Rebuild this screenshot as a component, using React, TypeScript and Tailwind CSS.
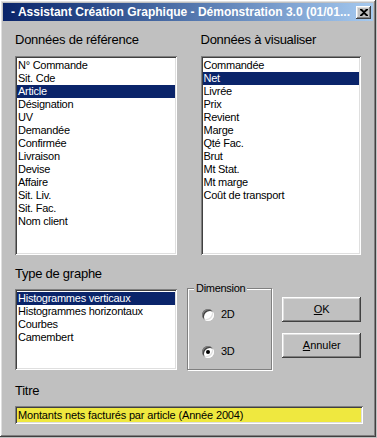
import React from "react";

const sunken =
  "shadow-[inset_1px_1px_#808080,inset_-1px_-1px_#ffffff,inset_2px_2px_#404040,inset_-2px_-2px_#dfdfdf]";
const raised =
  "shadow-[inset_-1px_-1px_#404040,inset_1px_1px_#ffffff,inset_-2px_-2px_#808080,inset_2px_2px_#dfdfdf]";

const reference = [
  "N° Commande",
  "Sit. Cde",
  "Article",
  "Désignation",
  "UV",
  "Demandée",
  "Confirmée",
  "Livraison",
  "Devise",
  "Affaire",
  "Sit. Liv.",
  "Sit. Fac.",
  "Nom client",
];

const visualiser = [
  "Commandée",
  "Net",
  "Livrée",
  "Prix",
  "Revient",
  "Marge",
  "Qté Fac.",
  "Brut",
  "Mt Stat.",
  "Mt marge",
  "Coût de transport",
];

const graphes = [
  "Histogrammes verticaux",
  "Histogrammes horizontaux",
  "Courbes",
  "Camembert",
];

function ListBox({
  items,
  selected,
  className,
}: {
  items: string[];
  selected: number;
  className: string;
}) {
  return (
    <div className={`bg-white p-[2px] pt-[3px] ${sunken} ${className}`}>
      {items.map((it, i) => (
        <div
          key={it}
          className={`h-[13px] pl-[1px] text-[11px] leading-[13px] tracking-[-0.25px] whitespace-nowrap ${
            i === selected ? "bg-[#0a246a] text-white" : "text-black"
          }`}
        >
          {it}
        </div>
      ))}
    </div>
  );
}

function Label({ children }: { children: React.ReactNode }) {
  return (
    <div className="h-[16px] text-[13px] leading-[16px] tracking-[-0.25px] text-black whitespace-nowrap">
      {children}
    </div>
  );
}

function Radio({ checked, label, className }: { checked: boolean; label: string; className: string }) {
  return (
    <div className={`flex items-center ${className}`}>
      <div className={`w-[12px] h-[12px] rounded-full bg-white flex items-center justify-center ${sunken}`}>
        {checked && <div className="w-[4px] h-[4px] rounded-full bg-black" />}
      </div>
      <span className="ml-[7px] text-[11px] leading-[13px] tracking-[-0.25px]">{label}</span>
    </div>
  );
}

export default function App() {
  return (
    <div className="w-[377px] h-[438px] bg-[#c0c0c0]" style={{ fontFamily: '"Liberation Sans", Arial, sans-serif' }}>
      <div className={`w-[376px] h-[437px] bg-[#c0c0c0] p-[3px] flex flex-col ${raised}`}>
        {/* title bar */}
        <div className="h-[18px] flex items-center pl-[8px] pr-[2px] bg-gradient-to-r from-[#0a246a] to-[#a6caf0]">
          <div className="flex-1 overflow-hidden whitespace-nowrap text-white font-bold text-[12px] leading-[18px]">
            - Assistant Création Graphique - Démonstration 3.0 (01/01...
          </div>
          <div className={`ml-[4px] w-[15px] h-[13px] bg-[#c0c0c0] flex items-center justify-center ${raised}`}>
            <svg width="8" height="7" viewBox="0 0 8 7">
              <path d="M0 0h2l2 2 2-2h2v1L5 3.5 8 6v1H6L4 5 2 7H0V6l3-2.5L0 1z" fill="#000" />
            </svg>
          </div>
        </div>

        <div className="flex flex-col px-[12px]">
          {/* row 1 */}
          <div className="flex mt-[11px]">
            <div className="w-[163px]">
              <Label>Données de référence</Label>
              <ListBox items={reference} selected={2} className="mt-[8px] h-[199px]" />
            </div>
            <div className="w-[162px] ml-[24px]">
              <Label>Données à visualiser</Label>
              <ListBox items={visualiser} selected={1} className="mt-[8px] h-[199px]" />
            </div>
          </div>

          {/* row 2 */}
          <div className="flex items-start mt-[11px]">
            <div className="w-[163px]">
              <Label>Type de graphe</Label>
              <ListBox items={graphes} selected={0} className="mt-[7px] h-[81px]" />
            </div>
            <fieldset className="ml-[10px] mt-[16px] w-[86px] h-[88px] border border-[#808080] shadow-[inset_1px_1px_#ffffff,1px_1px_#ffffff] px-0 pb-0 m-0">
              <legend className="ml-[6px] px-[2px] bg-[#c0c0c0] text-[11px] leading-[13px] tracking-[-0.3px]">
                Dimension
              </legend>
              <Radio checked={false} label="2D" className="ml-[14px] mt-[13px]" />
              <Radio checked={true} label="3D" className="ml-[14px] mt-[24px]" />
            </fieldset>
            <div className="ml-[10px] mt-[31px] w-[79px] flex flex-col">
              <button className={`h-[25px] bg-[#c0c0c0] text-[11px] text-black ${raised}`}>
                <span className="underline">O</span>K
              </button>
              <button className={`mt-[11px] h-[25px] bg-[#c0c0c0] text-[11px] text-black ${raised}`}>
                <span className="underline">A</span>nnuler
              </button>
            </div>
          </div>

          {/* row 3 */}
          <div className="mt-[13px]">
            <Label>Titre</Label>
            <div
              className={`mt-[7px] w-[348px] h-[18px] bg-[#efe83f] pl-[3px] text-[11px] leading-[18px] tracking-[-0.15px] whitespace-nowrap ${sunken}`}
            >
              Montants nets facturés par article (Année 2004)
            </div>
          </div>
        </div>
      </div>
    </div>
  );
}
